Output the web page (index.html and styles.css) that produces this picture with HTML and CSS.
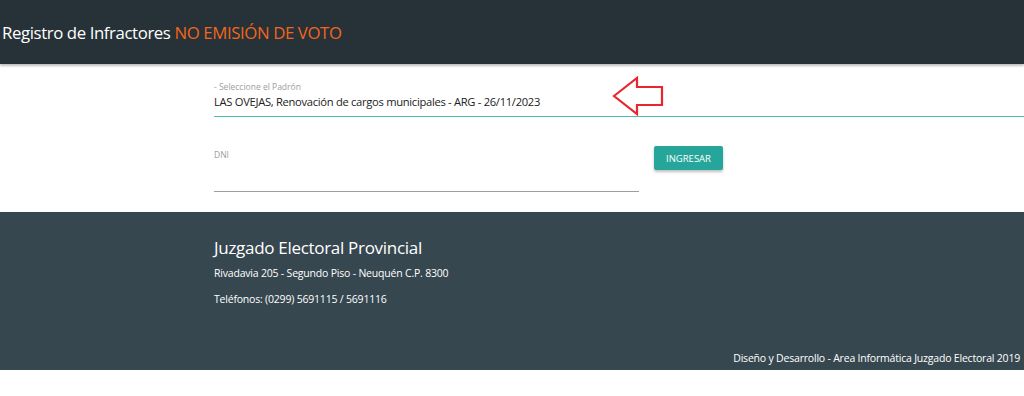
FILE: index.html
```html
<!DOCTYPE html>
<html lang="es">
<head>
    <meta charset="UTF-8">
    <meta name="viewport" content="width=device-width, initial-scale=1.0">
    <title>Registro de Infractores</title>
    <link rel="stylesheet" href="styles.css">
</head>
<body>
    <header class="topbar">
        <span class="brand">Registro de Infractores <span class="brand-accent">NO EMISIÓN DE VOTO</span></span>
    </header>

    <main class="content">
        <div class="field field-wide">
            <label class="field-label">- Seleccione el Padrón</label>
            <div class="field-value">LAS OVEJAS, Renovación de cargos municipales - ARG - 26/11/2023</div>
            <svg class="pointer" width="54" height="40" viewBox="0 0 54 40">
                <polygon points="2,20 25,2 25,11 50,11 50,29 25,29 25,38" fill="none" stroke="#e8262c" stroke-width="2.2" stroke-linejoin="miter"/>
            </svg>
        </div>

        <div class="row">
            <div class="field field-dni">
                <label class="field-label">DNI</label>
                <div class="field-value"></div>
            </div>
            <button class="btn">INGRESAR</button>
        </div>
    </main>

    <footer class="footer">
        <div class="footer-info">
            <h2>Juzgado Electoral Provincial</h2>
            <p>Rivadavia 205 - Segundo Piso - Neuquén C.P. 8300</p>
            <p>Teléfonos: (0299) 5691115 / 5691116</p>
        </div>
        <div class="footer-copy">Diseño y Desarrollo - Area Informática Juzgado Electoral 2019</div>
    </footer>
</body>
</html>
```

FILE: styles.css
```css
body {
    font-family: 'Open Sans', 'Noto Sans', sans-serif;
    margin: 0;
    background-color: #ffffff;
    color: #222;
}

.topbar {
    background-color: #263238;
    height: 64px;
    display: flex;
    align-items: center;
    padding-left: 2px;
    box-shadow: 0 2px 2px rgba(0, 0, 0, 0.25);
    position: relative;
}

.brand {
    color: #ffffff;
    font-size: 16.8px;
    letter-spacing: -0.4px;
}

.brand-accent {
    color: #f4651c;
}

.content {
    padding: 17px 0 0 214px;
    height: 131px;
}

.field {
    position: relative;
}

.field-label {
    display: block;
    font-size: 8.5px;
    color: #9e9e9e;
    line-height: 11px;
}

.field-value {
    font-size: 11.2px;
    color: #222;
    height: 24px;
    line-height: 20px;
    border-bottom: 1px solid #9e9e9e;
    letter-spacing: -0.3px;
}

.field-wide .field-value {
    border-bottom: 1.5px solid #4dbfb0;
}

.pointer {
    position: absolute;
    left: 398px;
    top: -5px;
}

.row {
    display: flex;
    align-items: flex-start;
    margin-top: 32px;
}

.field-dni {
    width: 425px;
}

.field-dni .field-value {
    height: 31px;
}

.btn {
    margin-left: 15px;
    margin-top: -3px;
    width: 69px;
    height: 24px;
    padding: 0;
    border: none;
    border-radius: 2px;
    background-color: #26a69a;
    color: #ffffff;
    font-family: inherit;
    font-size: 9.5px;
    box-shadow: 0 2px 3px rgba(0, 0, 0, 0.25);
}

.footer {
    background-color: #37474f;
    height: 158px;
    color: #ffffff;
    display: flex;
    flex-direction: column;
    justify-content: space-between;
}

.footer-info {
    padding: 24px 0 0 214px;
}

.footer-info h2 {
    font-weight: 400;
    font-size: 17px;
    margin: 0 0 7px;
    letter-spacing: -0.3px;
}

.footer-info p {
    font-size: 10.5px;
    margin: 0 0 12px;
    letter-spacing: -0.2px;
}

.footer-copy {
    text-align: right;
    font-size: 10.5px;
    padding: 0 4px 5px 0;
    letter-spacing: -0.2px;
}
```
